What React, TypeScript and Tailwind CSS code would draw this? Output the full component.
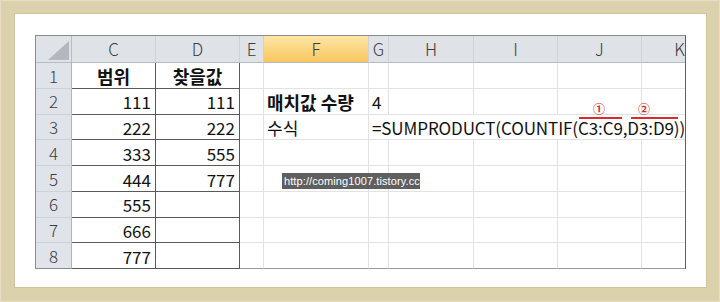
import React from 'react';

const cols = ['C', 'D', 'E', 'F', 'G', 'H', 'I', 'J', 'K'];
const colC = ['범위', '111', '222', '333', '444', '555', '666', '777'];
const colD = ['찾을값', '111', '222', '555', '777', '', '', ''];

const font = { fontFamily: '"Noto Sans CJK KR", "Noto Sans", sans-serif' };

function HeaderRow() {
  return (
    <>
      <div className="relative bg-[#dfe3e8] border-r border-b border-r-[#b7bcc4] border-b-[#b7bcc4]">
        <svg className="absolute left-[12px] top-[5px]" width="21" height="19" viewBox="0 0 21 19">
          <polygon points="21,0 21,19 0,19" fill="#b4b8be" />
        </svg>
      </div>
      {cols.map((c, i) => (
        <div
          key={c}
          className={`flex items-center justify-center text-[17px] font-light text-[#3c3c3c] border-b border-b-[#b7bcc4] ${
            i < cols.length - 1 ? 'border-r border-r-[#cdd2d9]' : ''
          } ${c === 'F' ? 'bg-gradient-to-b from-[#fde5a4] to-[#f8c75c]' : 'bg-[#dfe3e8]'}`}
        >
          {c === 'K' ? <span className="pl-[30px]">K</span> : c}
        </div>
      ))}
    </>
  );
}

function Cell({ children, dark, last, bold, right, center, className = '' }: {
  children?: React.ReactNode;
  dark?: boolean;
  last?: boolean;
  bold?: boolean;
  right?: boolean;
  center?: boolean;
  className?: string;
}) {
  return (
    <div
      className={`flex items-center whitespace-nowrap text-[17px] text-[#111] pt-[2px] ${
        dark ? 'border-r border-b border-[#5a5a5a]' : `${last ? '' : 'border-r'} border-b border-[#e2e2e2]`
      } ${bold ? 'font-bold text-[18px]' : ''} ${right ? 'justify-end pr-[4px]' : ''} ${center ? 'justify-center' : ''} ${className}`}
    >
      {children}
    </div>
  );
}

export default function App() {
  return (
    <div className="w-[720px] h-[302px] bg-[#dcd1ad] pt-[13px] pl-[14px] pr-[13px] pb-[14px] shadow-[inset_0_0_0_1px_#e6ddc2]" style={font}>
      <div className="w-full h-full bg-white pt-[21px] pl-[20px] border border-[#cfc49e]">
        <div className="relative w-[651px] border-t border-l border-r border-t-[#8c8c8c] border-l-[#8c8c8c] border-r-[#5f5f5f]">
          <div className="grid grid-cols-[36px_84px_84px_24px_105px_20px_85px_84px_84px_45px] grid-rows-[27px_repeat(8,25.75px)] overflow-hidden">
            <HeaderRow />
            {colC.map((c, r) => {
              const row = r + 1;
              return (
                <React.Fragment key={row}>
                  <div
                    className={`flex items-center justify-center text-[17px] font-light text-[#3c3c3c] bg-[#e0e4ea] border-r border-b border-r-[#b0b5bd] ${
                      row === 8 ? 'border-b-[#8c8c8c]' : 'border-b-[#cdd2d9]'
                    }`}
                  >
                    {row}
                  </div>
                  <Cell dark bold={row === 1} right={row > 1} center={row === 1}>{c}</Cell>
                  <Cell dark bold={row === 1} right={row > 1} center={row === 1}>{colD[r]}</Cell>
                  <Cell className={row === 8 ? 'border-b-[#9a9a9a]' : ''} />
                  <Cell bold={row === 2} className={`pl-[3px] ${row === 8 ? 'border-b-[#9a9a9a]' : ''}`}>
                    {row === 2 ? '매치값 수량' : row === 3 ? '수식' : ''}
                  </Cell>
                  {row === 3 ? (
                    <div className="col-span-5 flex items-center whitespace-nowrap overflow-hidden text-[17px] text-[#111] pt-[2px] pl-[3px] border-b border-[#e2e2e2] tracking-[-0.1px]">
                      =SUMPRODUCT(COUNTIF(C3:C9,D3:D9))
                    </div>
                  ) : (
                    <>
                      <Cell className={`pl-[3px] ${row === 8 ? 'border-b-[#9a9a9a]' : ''}`}>{row === 2 ? '4' : ''}</Cell>
                      <Cell className={row === 8 ? 'border-b-[#9a9a9a]' : ''} />
                      <Cell className={row === 8 ? 'border-b-[#9a9a9a]' : ''} />
                      <Cell className={row === 8 ? 'border-b-[#9a9a9a]' : ''} />
                      <Cell last className={row === 8 ? 'border-b-[#9a9a9a]' : ''} />
                    </>
                  )}
                </React.Fragment>
              );
            })}
          </div>

          {/* red marks over the formula ranges */}
          <div className="absolute left-[543px] top-[81px] w-[43px] h-[2px] bg-[#d82b2b]" />
          <div className="absolute left-[557px] top-[67px] w-[12px] h-[12px] text-[12px] leading-[12px] font-bold text-[#d82b2b] text-center">①</div>
          <div className="absolute left-[595px] top-[81px] w-[47px] h-[2px] bg-[#d82b2b]" />
          <div className="absolute left-[602px] top-[67px] w-[12px] h-[12px] text-[12px] leading-[12px] font-bold text-[#d82b2b] text-center">②</div>

          {/* watermark */}
          <div
            className="absolute left-[246px] top-[137px] w-[138px] h-[16px] bg-[#5f5f5f] overflow-hidden whitespace-nowrap text-white text-[11px] leading-[16px] pl-[2px]"
            style={{ fontFamily: '"Liberation Sans", sans-serif', letterSpacing: '0.1px' }}
          >
            http://coming1007.tistory.cc
          </div>
        </div>
      </div>
    </div>
  );
}
